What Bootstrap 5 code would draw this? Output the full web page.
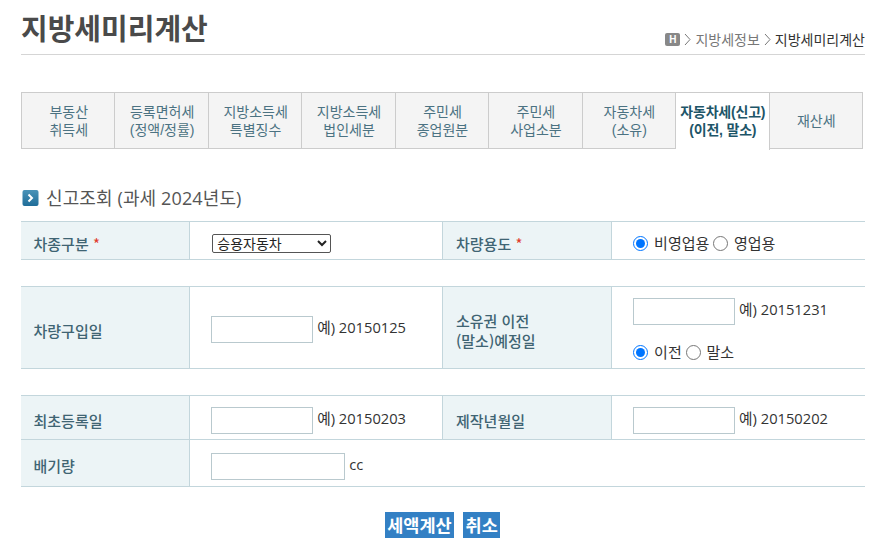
<!DOCTYPE html>
<html lang="ko">
<head>
<meta charset="utf-8">
<title>지방세미리계산</title>
<link href="https://cdn.jsdelivr.net/npm/bootstrap@5.3.0/dist/css/bootstrap.min.css" rel="stylesheet">
<style>
html,body{height:550px;overflow:hidden}
body{font-family:"Open Sans","Noto Sans CJK KR",sans-serif;font-size:14px;color:#333;background:#fff}
.page-wrap{width:844px;margin-left:21px}
.page-head{height:55px;border-bottom:1px solid #d5d5d5}
.page-title{font-family:"Noto Sans CJK KR",sans-serif;font-size:29px;font-weight:700;color:#4a4a4a;line-height:40px;margin:0 0 7px}
.crumbs{font-family:"Noto Sans CJK KR",sans-serif;font-size:14px;line-height:18px;color:#777;margin:0 0 6px 0;gap:4px}
.crumbs b{font-weight:400;color:#333}
.home-ic{width:15px;height:13px;background:#888;border-radius:2px;color:#fff;font:700 10px/13px "Liberation Sans",sans-serif;text-align:center}
.tabbar{margin-top:37px;width:842px;height:57px;background:#f4f4f4;border:1px solid #ccc}
.tabcell{flex:1 1 0;display:flex;align-items:center;justify-content:center;text-align:center;border-right:1px solid #ccc;font-family:"Liberation Sans","Noto Sans CJK KR",sans-serif;font-size:14px;line-height:18px;color:#4b7282;padding-left:1px}
.tabcell:last-child{border-right:0}
.tabcell.on{background:#fff;color:#1d5568;font-weight:700;margin-bottom:-2px;letter-spacing:-.2px;padding-bottom:2px}
.sec-title{margin:37px 0 11px;height:24px;padding-left:1px;font-family:"Open Sans","Noto Sans CJK KR",sans-serif;font-size:18px;line-height:24px;color:#555;font-weight:400;gap:7px;letter-spacing:.12px}
.calc{width:844px;table-layout:fixed;border-collapse:collapse;margin-bottom:26px;color:#333}
.calc th,.calc td{border-top:1px solid #c3d6dc;border-bottom:1px solid #c3d6dc;padding:6px 0 0}
.calc th{background:#ecf4f6;color:#3f6473;font-family:"Noto Sans CJK KR",sans-serif;font-weight:500;font-size:15px;padding-left:12.5px;line-height:20px;border-right:1px solid #c3d6dc}
.calc td{padding-left:21px;font-size:14.7px}
.calc td.nudge{padding-bottom:2px}
.calc td+th{border-left:1px solid #c3d6dc}
.star{color:#e03a2a;font-weight:400}
.calc input[type=text]{width:102px;height:27px;border:1px solid #b9c9ce;padding:0;background:#fff;vertical-align:middle}
.calc input.wide{width:134px}
.calc input[type=radio]{width:15px;height:15px;margin:0 2px 0 0;vertical-align:-2px;accent-color:#0075ff}
.calc select{width:119px;height:19px;margin:-4px 0 0 1px;font-family:"Liberation Sans","Noto Sans CJK KR",sans-serif;font-size:14px;padding:0;vertical-align:middle;border:1px solid #555;border-radius:2px;background-color:#fff;color:#222}
.rlabel{font-size:15px}
.act-btn{background:#3380c4;color:#fff;font-family:"Noto Sans CJK KR",sans-serif;font-weight:700;font-size:17.5px;line-height:26px;height:26px;padding:0 2.5px;border:0;border-radius:0}
.act-row{margin-top:-1px;padding-right:1px;gap:9px}
</style>
</head>
<body>
<div class="page-wrap">
  <div class="page-head d-flex justify-content-between align-items-end">
    <h1 class="page-title">지방세미리계산</h1>
    <div class="crumbs d-flex align-items-center">
      <span class="home-ic">H</span>
      <svg width="7" height="13" viewBox="0 0 7 13"><path d="M1 1l5 5.5L1 12" fill="none" stroke="#777"/></svg>
      <span>지방세정보</span>
      <svg width="7" height="13" viewBox="0 0 7 13"><path d="M1 1l5 5.5L1 12" fill="none" stroke="#777"/></svg>
      <b>지방세미리계산</b>
    </div>
  </div>

  <div class="tabbar d-flex">
    <div class="tabcell">부동산<br>취득세</div>
    <div class="tabcell">등록면허세<br>(정액/정률)</div>
    <div class="tabcell">지방소득세<br>특별징수</div>
    <div class="tabcell">지방소득세<br>법인세분</div>
    <div class="tabcell">주민세<br>종업원분</div>
    <div class="tabcell">주민세<br>사업소분</div>
    <div class="tabcell">자동차세<br>(소유)</div>
    <div class="tabcell on">자동차세(신고)<br>(이전, 말소)</div>
    <div class="tabcell">재산세</div>
  </div>

  <h2 class="sec-title d-flex align-items-center">
    <svg width="17" height="18" viewBox="0 0 17 18"><defs><linearGradient id="sq" x1="0" y1="0" x2="0" y2="1"><stop offset="0" stop-color="#4a93b8"/><stop offset="1" stop-color="#1f6d99"/></linearGradient></defs><rect x=".5" y="1" width="16" height="16" rx="2" fill="url(#sq)"/><path d="M6.5 5.5l3.5 3.5-3.5 3.5" fill="none" stroke="#fff" stroke-width="2"/></svg>
    <span>신고조회 (과세 2024년도)</span>
  </h2>

  <table class="calc">
    <colgroup><col style="width:20%"><col style="width:30%"><col style="width:20%"><col style="width:30%"></colgroup>
    <tr style="height:38px">
      <th>차종구분 <span class="star">*</span></th>
      <td><select><option>승용자동차</option></select></td>
      <th>차량용도 <span class="star">*</span></th>
      <td><input type="radio" name="u" checked> <span class="rlabel">비영업용</span> <input type="radio" name="u"> <span class="rlabel">영업용</span></td>
    </tr>
  </table>

  <table class="calc">
    <colgroup><col style="width:20%"><col style="width:30%"><col style="width:20%"><col style="width:30%"></colgroup>
    <tr style="height:82px">
      <th>차량구입일</th>
      <td class="nudge"><input type="text"> <span>예) 20150125</span></td>
      <th>소유권 이전<br>(말소)예정일</th>
      <td>
        <div class="mb-3"><input type="text"> <span>예) 20151231</span></div>
        <div><input type="radio" name="m" checked> <span class="rlabel">이전</span> <input type="radio" name="m"> <span class="rlabel">말소</span></div>
      </td>
    </tr>
  </table>

  <table class="calc">
    <colgroup><col style="width:20%"><col style="width:30%"><col style="width:20%"><col style="width:30%"></colgroup>
    <tr style="height:44px">
      <th>최초등록일</th>
      <td><input type="text"> <span>예) 20150203</span></td>
      <th>제작년월일</th>
      <td><input type="text"> <span>예) 20150202</span></td>
    </tr>
    <tr style="height:47px">
      <th>배기량</th>
      <td colspan="3"><input type="text" class="wide"> <span>cc</span></td>
    </tr>
  </table>

  <div class="act-row d-flex justify-content-center">
    <button type="button" class="btn act-btn">세액계산</button>
    <button type="button" class="btn act-btn">취소</button>
  </div>
</div>
<script src="https://cdn.jsdelivr.net/npm/bootstrap@5.3.0/dist/js/bootstrap.bundle.min.js"></script>
</body>
</html>
